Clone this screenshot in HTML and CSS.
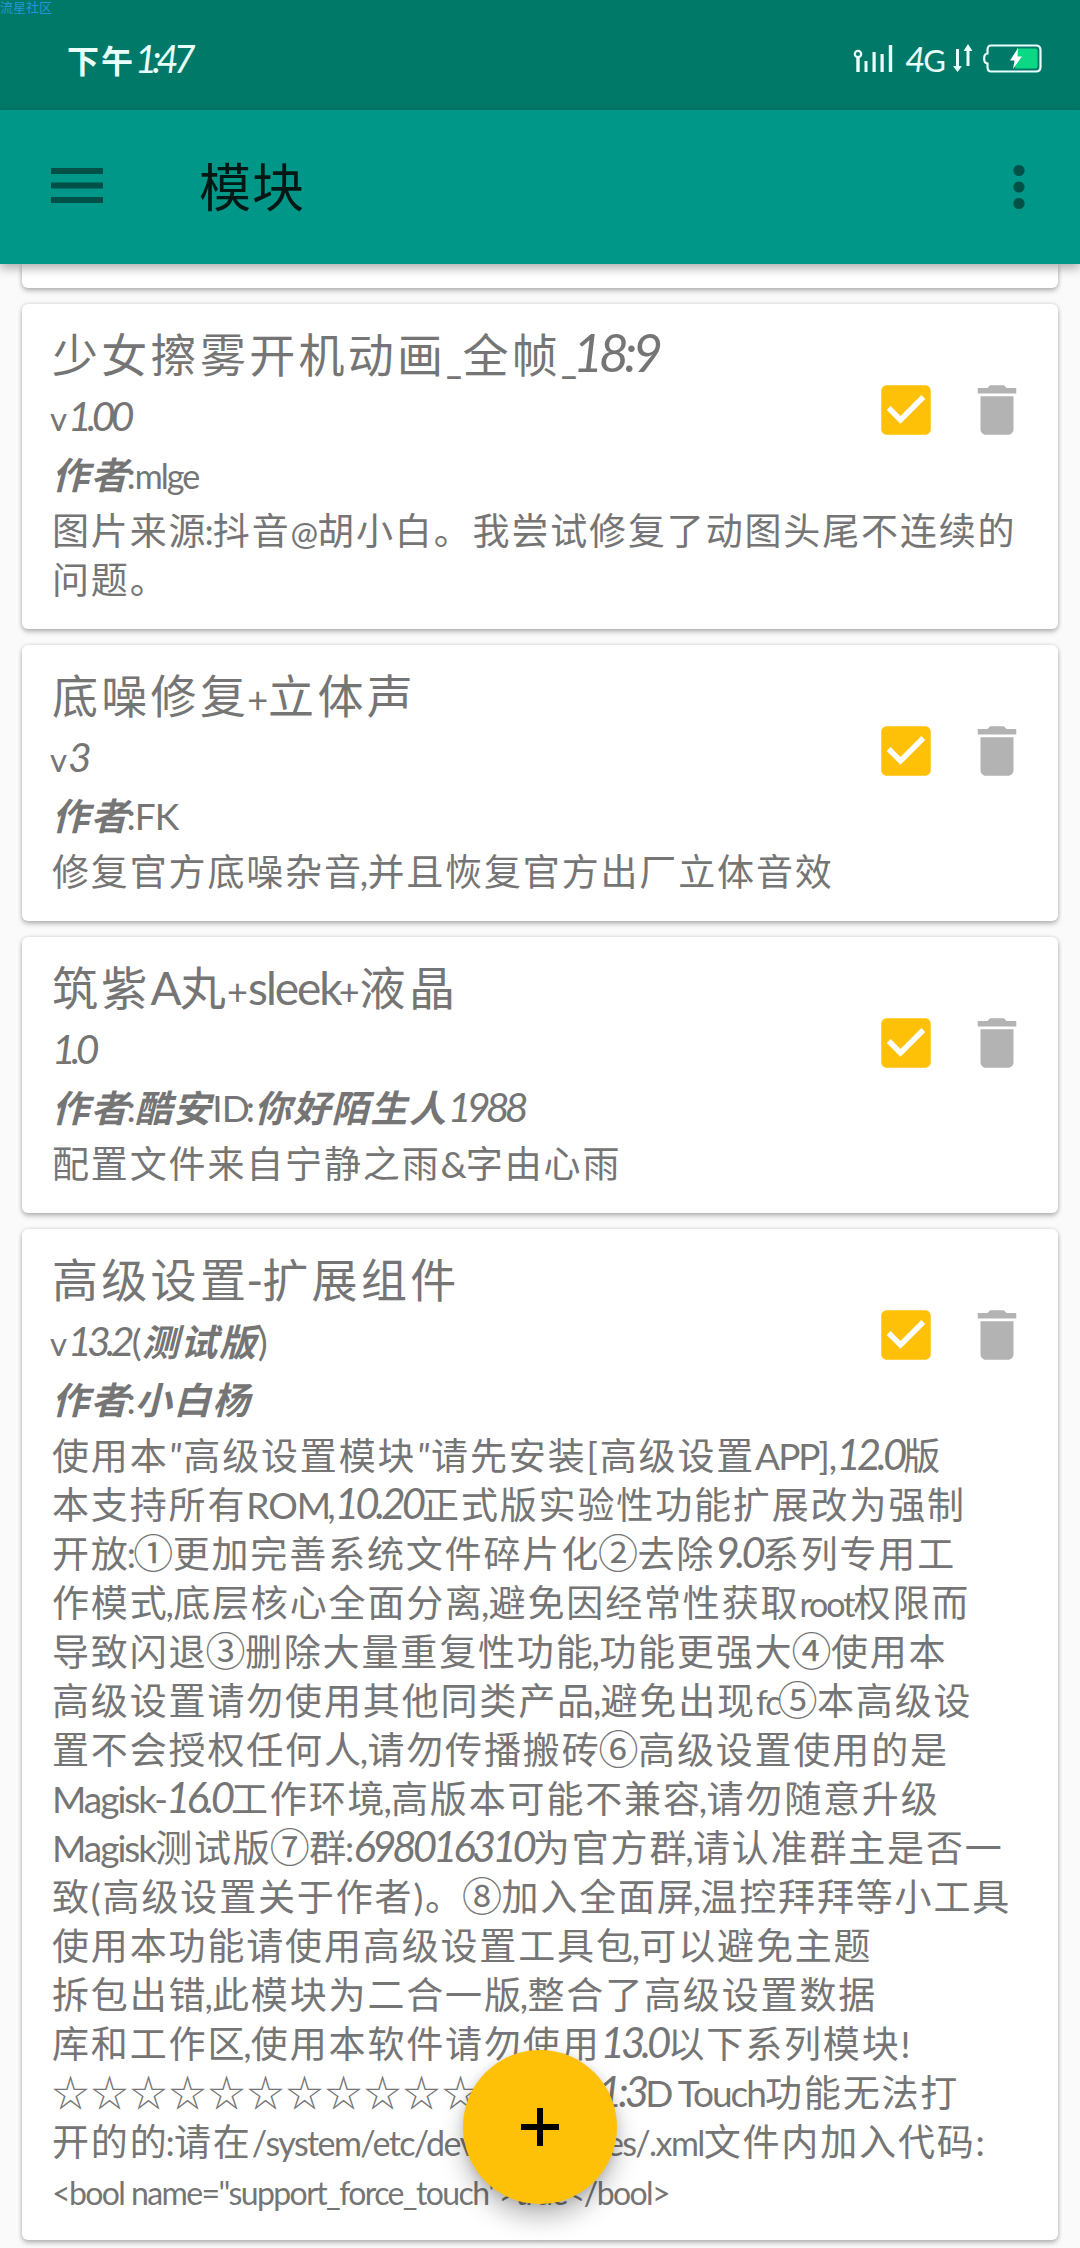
FILE: index.html
```html
<!DOCTYPE html>
<html lang="zh-CN">
<head>
<meta charset="utf-8">
<title>模块</title>
<link rel="stylesheet" href="styles.css">
</head>
<body>
<svg class="defs" width="0" height="0">
  <symbol id="check" viewBox="0 0 24 24"><path d="M19 3H5c-1.1 0-2 .9-2 2v14c0 1.1.9 2 2 2h14c1.1 0 2-.9 2-2V5c0-1.1-.9-2-2-2zm-9 14l-5-5 1.41-1.41L10 14.17l7.59-7.59L19 8l-9 9z"/></symbol>
  <symbol id="trash" viewBox="0 0 24 24"><path d="M6 19c0 1.1.9 2 2 2h8c1.1 0 2-.9 2-2V7H6v12zM19 4h-3.5l-1-1h-5l-1 1H5v2h14V4z"/></symbol>
</svg>

<div class="screen">
  <div class="watermark">流星社区</div>
  <header class="status">
    <div class="clock">下午<span class="num">1:47</span></div>
    <div class="indicators">
      <svg class="signal" width="41" height="30" viewBox="0 0 41 30"><g fill="#e8fffa"><circle cx="5" cy="10" r="3.2" fill="none" stroke="#e8fffa" stroke-width="2.2"/><rect x="3.3" y="13" width="3.4" height="15"/><rect x="11.5" y="17" width="3" height="11"/><rect x="19.5" y="8" width="3.2" height="20"/><rect x="27.5" y="10" width="3.2" height="18"/><rect x="35.8" y="1" width="3.4" height="27"/></g></svg>
      <span class="net"><span class="num">4</span>G</span>
      <svg class="arrows" width="22" height="30" viewBox="0 0 22 30"><g fill="#e8fffa"><path d="M4 5h3v17h3l-4.500 6L1 22h3z"/><path d="M14.500 22h3V7h3L16 0l-4.500 7h3z"/></g></svg>
      <svg class="battery" width="61" height="30" viewBox="0 0 61 30"><path d="M8 1.500h45q4.500 0 4.500 4.500v17q0 4.500-4.500 4.500H8q-3.500 0-3.500-4.500v-3.500Q1 19 1.200 14.500 1 10 4.500 9.500V6Q4.500 1.500 8 1.500z" fill="none" stroke="#eafffb" stroke-width="2.200"/><path d="M34 4.500h18q2.500 0 2.500 2v16q0 2-2.500 2H32z" fill="#0bd784"/><path d="M35 4l-8 12.500h4.500L30 25l9-12.500h-4.500z" fill="#fff"/></svg>
    </div>
  </header>
  <div class="toolbar">
    <svg class="menu" width="52" height="36" viewBox="0 0 52 36"><path d="M0 0h52v6H0zM0 14.500h52v6H0zM0 29h52v6H0z"/></svg>
    <h1>模块</h1>
    <svg class="more" width="12" height="46" viewBox="0 0 12 46"><circle cx="6" cy="6.500" r="5.600"/><circle cx="6" cy="23" r="5.600"/><circle cx="6" cy="39.500" r="5.600"/></svg>
  </div>

  <main class="list">
    <section class="card stub"></section>

    <section class="card">
      <div class="head">
        <div class="info">
          <h2>少女擦雾开机动画<span class="us">_</span>全帧<span class="us">_</span><span class="num">18:9</span></h2>
          <p class="ver"><span class="v">v</span><span class="num">1.00</span></p>
          <p class="author"><b>作者</b><i>:</i><span class="name">mlge</span></p>
        </div>
        <div class="actions"><svg class="on"><use href="#check"/></svg><svg class="del"><use href="#trash"/></svg></div>
      </div>
      <p class="desc">图片来源<i>:</i>抖音<span class="at">@</span>胡小白。我尝试修复了动图头尾不连续的<br>问题。</p>
    </section>

    <section class="card">
      <div class="head">
        <div class="info">
          <h2>底噪修复<span class="plus">+</span>立体声</h2>
          <p class="ver"><span class="v">v</span><span class="num">3</span></p>
          <p class="author"><b>作者</b><i>:</i><span class="cap">FK</span></p>
        </div>
        <div class="actions"><svg class="on"><use href="#check"/></svg><svg class="del"><use href="#trash"/></svg></div>
      </div>
      <p class="desc">修复官方底噪杂音<i>,</i>并且恢复官方出厂立体音效</p>
    </section>

    <section class="card">
      <div class="head">
        <div class="info">
          <h2>筑紫<span class="cap">A</span>丸<span class="plus">+</span><span class="word">sleek</span><span class="plus">+</span>液晶</h2>
          <p class="ver"><span class="num">1.0</span></p>
          <p class="author"><b>作者</b><i>:</i><b>酷安</b><span class="cap">ID</span><i>:</i><b>你好陌生人</b><span class="num">1988</span></p>
        </div>
        <div class="actions"><svg class="on"><use href="#check"/></svg><svg class="del"><use href="#trash"/></svg></div>
      </div>
      <p class="desc">配置文件来自宁静之雨<span class="amp">&amp;</span>字由心雨</p>
    </section>

    <section class="card">
      <div class="head">
        <div class="info">
          <h2>高级设置<span class="dash">-</span>扩展组件</h2>
          <p class="ver"><span class="v">v</span><span class="num">13.2</span>(<b>测试版</b>)</p>
          <p class="author"><b>作者</b><i>:</i><b>小白杨</b></p>
        </div>
        <div class="actions"><svg class="on"><use href="#check"/></svg><svg class="del"><use href="#trash"/></svg></div>
      </div>
      <p class="desc">使用本<em>"</em>高级设置模块<em>"</em>请先安装[高级设置<span class="lat">APP</span>]<i>,</i><span class="num">12.0</span>版<br>
本支持所有<span class="cap">ROM</span><i>,</i><span class="num">10.20</span>正式版实验性功能扩展改为强制<br>
开放<i>:</i><span class="circ">①</span>更加完善系统文件碎片化<span class="circ">②</span>去除<span class="num">9.0</span>系列专用工<br>
作模式<i>,</i>底层核心全面分离<i>,</i>避免因经常性获取<span class="low">root</span>权限而<br>
导致闪退<span class="circ">③</span>删除大量重复性功能<i>,</i>功能更强大<span class="circ">④</span>使用本<br>
高级设置请勿使用其他同类产品<i>,</i>避免出现<span class="low">fc</span><span class="circ">⑤</span>本高级设<br>
置不会授权任何人<i>,</i>请勿传播搬砖<span class="circ">⑥</span>高级设置使用的是<br>
<span class="lat">Magisk-</span><span class="num">16.0</span>工作环境<i>,</i>高版本可能不兼容<i>,</i>请勿随意升级<br>
<span class="lat">Magisk</span>测试版<span class="circ">⑦</span>群<i>:</i><span class="num">698016310</span>为官方群<i>,</i>请认准群主是否一<br>
致(高级设置关于作者)。<span class="circ">⑧</span>加入全面屏<i>,</i>温控拜拜等小工具<br>
使用本功能请使用高级设置工具包<i>,</i>可以避免主题<br>
拆包出错<i>,</i>此模块为二合一版<i>,</i>整合了高级设置数据<br>
库和工作区<i>,</i>使用本软件请勿使用<span class="num">13.0</span>以下系列模块!<br>
<span class="stars">☆☆☆☆☆☆☆☆☆☆☆☆☆☆</span><span class="num">1:3</span><span class="lat">D Touch</span>功能无法打<br>
开的的<i>:</i>请在<span class="path">/system/etc/device_features/.xml</span>文件内加入代码:<br>
<span class="code">&lt;bool name="support_force_touch"&gt;true&lt;/bool&gt;</span></p>
    </section>
  </main>

  <button class="fab" aria-label="添加"><svg width="40" height="40" viewBox="0 0 40 40"><path d="M17 1h6v16h16v6H23v16h-6V23H1v-6h16z"/></svg></button>
</div>
</body>
</html>
```
FILE: styles.css
```css
* { box-sizing: border-box; }
html, body { margin: 0; padding: 0; }
body {
  width: 1080px;
  height: 2248px;
  overflow: hidden;
  background: #fafafa;
  font-family: Lato, "Noto Sans CJK SC", sans-serif;
  color: #757575;
}
h1, h2, p { margin: 0; font-weight: 400; }
.defs { display: block; width: 0; height: 0; }
.screen { position: relative; width: 1080px; height: 2248px; overflow: hidden; }

.watermark {
  position: absolute;
  left: 0;
  top: 0;
  z-index: 3;
  font-size: 13px;
  line-height: 15px;
  color: #2196dc;
}

.status {
  height: 110px;
  background: #007968;
  color: #e8fffa;
  display: flex;
  justify-content: space-between;
  padding: 0 36px 0 67px;
}
.clock { font-size: 32px; font-weight: 700; letter-spacing: 2px; line-height: 116px; }
.clock .num { font-size: 38px; font-weight: 400; letter-spacing: -5px; }
.indicators { display: flex; align-items: flex-start; padding-top: 44px; }
.net { width: 47px; margin-left: 11px; font-size: 31px; line-height: 28px; letter-spacing: -2px; }
.net .num { font-size: 35px; letter-spacing: -2px; }
.battery { margin-left: 9px; }

.toolbar {
  position: relative;
  z-index: 2;
  height: 154px;
  background: #009688;
  box-shadow: 0 4px 10px rgba(0, 0, 0, .32);
  display: flex;
  align-items: center;
  padding: 0 55px 0 51px;
}
.toolbar svg { fill: #005048; }
.toolbar h1 {
  margin-left: 96px;
  flex: 1;
  font-size: 52px;
  line-height: 70px;
  letter-spacing: 1px;
  color: #001714;
}
.menu { margin-top: -3px; }

.list { display: flex; flex-direction: column; gap: 16px; padding: 0 22px; }
.card {
  background: #fff;
  border-radius: 6px;
  padding: 20px 28px 25px 30px;
  box-shadow: 0 3px 5px rgba(0, 0, 0, .24), 0 0 4px rgba(0, 0, 0, .14);
}
.stub { height: 24px; padding: 0; border-radius: 0 0 6px 6px; }
.head { display: flex; justify-content: space-between; height: 178px; }
.info { white-space: nowrap; }
.card h2 { font-size: 46px; line-height: 62px; letter-spacing: 3.300px; }
.ver, .author { font-size: 37px; letter-spacing: 0; }
.ver { line-height: 62px; }
.author { line-height: 54px; }
b { font-style: italic; font-weight: 700; letter-spacing: 1.700px; }
.actions { display: flex; gap: 25px; padding-top: 53px; }
.actions svg { width: 66px; height: 66px; }
.on { fill: #ffc107; }
.del { fill: #b3b3b3; }
.desc {
  margin-top: 4px;
  font-size: 37px;
  line-height: 49px;
  letter-spacing: 1.850px;
  white-space: nowrap;
}

/* inline runs must not stretch the line they sit in */
.info span, .info b, .info i, .desc span, .desc i, .desc em { line-height: 1px; }

/* narrow punctuation between ideographs */
i { font-style: normal; margin-left: -3px; letter-spacing: -.800px; }

/* slanted figures */
.num { font-style: italic; font-size: 42px; letter-spacing: -4px; }
.ver .num { font-size: 41px; letter-spacing: -4.800px; margin-right: 2px; }
.author .num { font-size: 41px; letter-spacing: -4.800px; }
h2 .num { font-size: 52px; letter-spacing: -4.500px; margin-left: -4px; }

h2 .us { display: inline-block; width: 14px; margin-right: 2px; transform: scaleX(.75); transform-origin: 0 0; }
h2 .plus { font-size: 36px; letter-spacing: 0; margin: 0 0 0 -2px; }
h2 .word { letter-spacing: -2px; }
h2 .cap { letter-spacing: -2px; }
h2 .dash { margin-left: -3px; letter-spacing: -1px; }
.v { font-size: 33px; letter-spacing: 1px; margin-left: -2px; }
.name { font-size: 34px; letter-spacing: -2px; }
.at { font-size: 33px; letter-spacing: -2px; margin-right: 1px; }
.amp { letter-spacing: -1px; }
.lat { letter-spacing: -2px; }
.cap { letter-spacing: -1px; }
.low { font-size: 34px; letter-spacing: -2px; }
.path { font-size: 34px; letter-spacing: -1.600px; }
.code { font-size: 32px; letter-spacing: -1.600px; }
.circ { font-family: "Noto Sans CJK SC", sans-serif; font-size: 40px; margin-left: -2px; letter-spacing: -.500px; }
.stars { letter-spacing: 2px; }

.fab {
  position: absolute;
  left: 463px;
  top: 2050px;
  width: 154px;
  height: 154px;
  padding: 0;
  border: 0;
  border-radius: 50%;
  background: #ffc107;
  box-shadow: 0 14px 24px rgba(0, 0, 0, .26), 0 2px 10px rgba(0, 0, 0, .12);
  display: grid;
  place-items: center;
}
```
